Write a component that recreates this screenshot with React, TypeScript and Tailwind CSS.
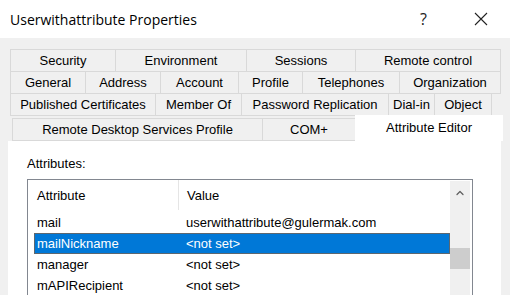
import { ChevronUp } from 'lucide-react';

const rows: { label: string; w: number }[][] = [
  [
    { label: 'Security', w: 106 },
    { label: 'Environment', w: 132 },
    { label: 'Sessions', w: 110 },
    { label: 'Remote control', w: 146 },
  ],
  [
    { label: 'General', w: 76 },
    { label: 'Address', w: 76 },
    { label: 'Account', w: 79 },
    { label: 'Profile', w: 65 },
    { label: 'Telephones', w: 98 },
    { label: 'Organization', w: 102 },
  ],
  [
    { label: 'Published Certificates', w: 146 },
    { label: 'Member Of', w: 87 },
    { label: 'Password Replication', w: 148 },
    { label: 'Dial-in', w: 47 },
    { label: 'Object', w: 58 },
  ],
];

const attrs = [
  { name: 'mail', value: 'userwithattribute@gulermak.com' },
  { name: 'mailNickname', value: '<not set>', selected: true },
  { name: 'manager', value: '<not set>' },
  { name: 'mAPIRecipient', value: '<not set>' },
];

function Tab({ label, w }: { label: string; w: number }) {
  return (
    <div
      className="h-[23px] flex items-center justify-center border border-[#d9d9d9] -ml-px first:ml-0 bg-[#f0f0f0] text-[13px] text-black"
      style={{ width: w }}
    >
      {label}
    </div>
  );
}

export default function App() {
  return (
    <div className="w-[510px] h-[295px] overflow-hidden bg-[#f0f0f0] font-['Liberation_Sans',Arial,sans-serif]">
      {/* Title bar */}
      <div className="h-[38px] bg-white flex items-center">
        <span className="ml-[10px] text-[14px] text-black font-['Open_Sans','Noto_Sans',sans-serif]">
          Userwithattribute Properties
        </span>
        <span className="ml-auto mr-[47px] text-[16px] text-[#222] font-['Open_Sans',sans-serif]">?</span>
        <svg width="14" height="14" viewBox="0 0 14 14" className="mr-[22px]">
          <path d="M1 1 L13 13 M13 1 L1 13" stroke="#222" strokeWidth="1.1" />
        </svg>
      </div>

      {/* Tabs */}
      <div className="pt-[11px] pl-[10px] flex flex-col">
        {rows.map((r, i) => (
          <div key={i} className="flex -mt-px first:mt-0">
            {r.map((t) => (
              <Tab key={t.label} {...t} />
            ))}
          </div>
        ))}
        <div className="flex -mt-px ml-[2px] items-end">
          <Tab label="Remote Desktop Services Profile" w={251} />
          <Tab label="COM+" w={94} />
          <div className="w-[148px] h-[26px] -ml-px bg-white flex items-start justify-center pt-[3px] text-[13px] text-black">
            Attribute Editor
          </div>
        </div>
      </div>

      {/* Panel */}
      <div className="ml-[8px] w-[493px] h-[160px] bg-white pt-[15px] pl-[19px]">
        <div className="text-[13px] text-black leading-[16px]">Attributes:</div>
        <div className="mt-[7px] w-[446px] h-[130px] border border-[#828790] flex">
          <div className="flex-1 pl-[6px]">
            <div className="h-[32px] flex items-center text-[13px] text-black">
              <div className="w-[144px] pl-[3px]">Attribute</div>
              <div className="w-px h-[30px] bg-[#e5e5e5] self-start" />
              <div className="pl-[8px]">Value</div>
            </div>
            {attrs.map((a) => (
              <div
                key={a.name}
                className={
                  a.selected
                    ? 'h-[21px] flex items-center text-[13px] text-white bg-[#0078d7] border border-[#5c6770]'
                    : 'h-[21px] flex items-center text-[13px] text-black border border-transparent'
                }
              >
                <div className="w-[151px] pl-[2px]">{a.name}</div>
                <div>{a.value}</div>
              </div>
            ))}
          </div>
          <div className="w-[20px] mt-px mr-[2px] bg-[#f0f0f0] flex flex-col items-center">
            <ChevronUp size={12} strokeWidth={2.5} className="mt-[6px] text-[#606060]" />
            <div className="mt-[49px] w-[20px] h-[21px] bg-[#cdcdcd]" />
          </div>
        </div>
      </div>
    </div>
  );
}
